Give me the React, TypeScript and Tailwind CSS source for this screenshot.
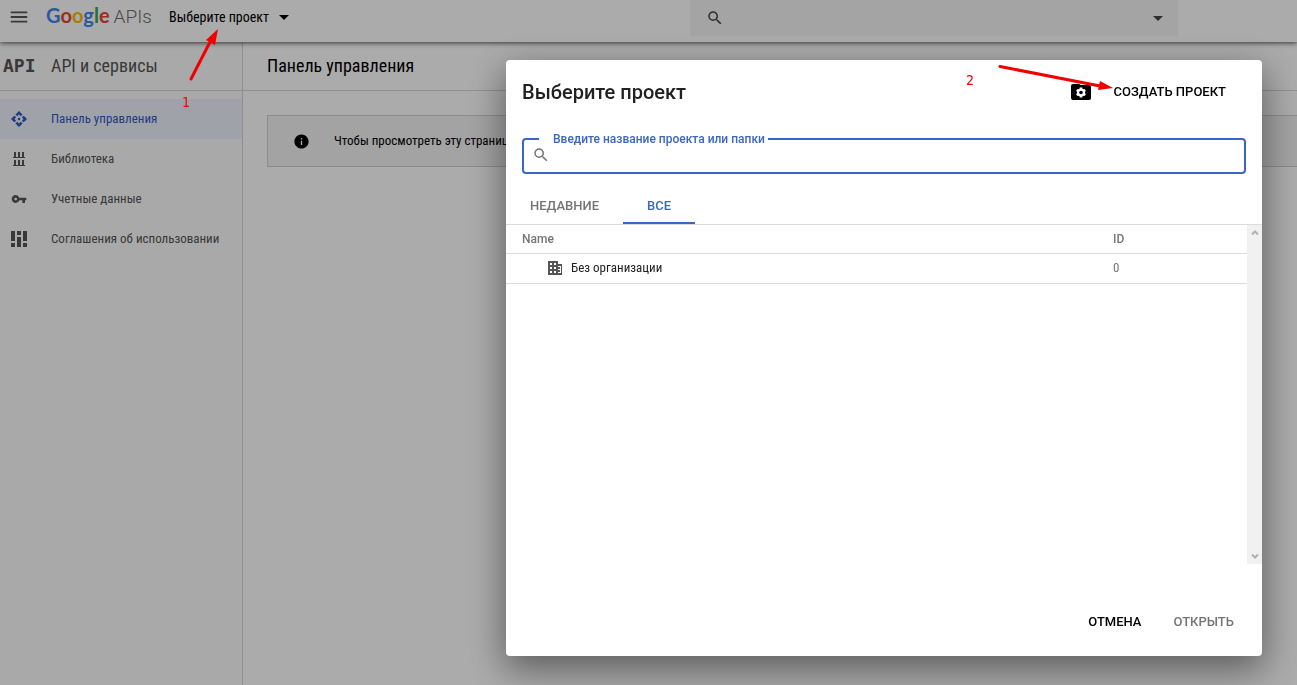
import { MdArrowDropDown, MdInfo, MdMenu, MdSearch, MdVpnKey } from "react-icons/md";

const DashboardIcon = () => (
  <svg viewBox="0 0 16 16" className="size-4" fill="currentColor">
    <path d="M8 0 4.500 3.500V5L6 5.500 8 3.500l2 2 1.500-.5V3.500zM8 16l3.500-3.500V11l-1.500-.5-2 2-2-2-1.500.5v1.500zM0 8l3 3h1.500l.5-1.500L3.500 8 5 6.500 4.500 5H3zM16 8l-3-3h-1.500L11 6.500 12.500 8 11 9.500l.5 1.500H13z" />
    <path d="M4.200 4.200 5.800 5.800M11.800 4.200l-1.600 1.600M4.200 11.800l1.600-1.600M11.800 11.800l-1.600-1.600" stroke="#eef2fd" strokeWidth="1.500" />
    <circle cx="8" cy="8" r="1.300" />
  </svg>
);

const LibraryIcon = () => (
  <svg viewBox="0 0 16 16" className="size-4" fill="currentColor">
    <path d="M3 1h2v5h2V1h2v5h2V1h2v5h1v1H2V6h1zM3 9h2v5h2V9h2v5h2V9h2v5h1v1H2v-1h1z" />
  </svg>
);

const AgreementsIcon = () => (
  <svg viewBox="0 0 16 16" className="size-4" fill="currentColor">
    <path d="M0 0h4v10H0zM0 12h4v4H0zM6 0h4v4H6zM6 6h4v10H6zM12 0h4v10h-4zM12 12h4v4h-4z" />
  </svg>
);

const OrganizationIcon = () => (
  <svg viewBox="0 0 15 14" className="h-[14px] w-[15px]" fill="#555">
    <path
      fillRule="evenodd"
      d="M0 0h10v3h4v11H0zM2 2v2h2V2zM6 2v2h2V2zM2 6v2h2V6zM6 6v2h2V6zM2 10v2h2v-2zM6 10v2h2v-2zM10 5v7h3V5z"
    />
    <path d="M10 6h2v2h-2zM10 9h2v2h-2z" />
  </svg>
);

const FolderSettingsIcon = () => (
  <svg viewBox="0 0 20 16" className="h-4 w-5">
    <path d="M2 0h6l2 1h8a2 2 0 0 1 2 2v11a2 2 0 0 1-2 2H2a2 2 0 0 1-2-2V2a2 2 0 0 1 2-2z" fill="black" />
    <g fill="white">
      <circle cx="10" cy="8.500" r="4" />
      <path d="M8.700 3.500h2.600v10H8.700zM5 7.100l1.300-2.200 8.700 5-1.300 2.200zM13.700 4.900 15 7.100l-8.700 5L5 9.900z" />
    </g>
    <circle cx="10" cy="8.500" r="1.800" fill="black" />
  </svg>
);

const navItems = [
  { title: "Панель управления", icon: <DashboardIcon />, active: true },
  { title: "Библиотека", icon: <LibraryIcon />, active: false },
  { title: "Учетные данные", icon: <MdVpnKey className="size-4" />, active: false },
  { title: "Соглашения об использовании", icon: <AgreementsIcon />, active: false },
];

const Header = () => (
  <header className="relative flex h-[42px] shrink-0 items-center bg-white shadow-[0_1px_5px_rgba(0,0,0,0.7)]">
    <button aria-label="Меню" className="ml-2 mb-2 text-[#555]">
      <MdMenu className="size-[22px]" />
    </button>
    <a href="#" className="mb-[10px] ml-4 flex w-[123px] items-baseline gap-1 leading-6">
      <span className="font-['Lato',sans-serif] text-xl leading-6 font-bold">
        <span className="text-[#4285f4]">G</span>
        <span className="text-[#ea4335]">o</span>
        <span className="text-[#fbbc05]">o</span>
        <span className="text-[#4285f4]">g</span>
        <span className="text-[#34a853]">l</span>
        <span className="text-[#ea4335]">e</span>
      </span>
      <span className="font-['Roboto',sans-serif] text-[19px] font-light text-[#707070]">APIs</span>
    </a>
    <button className="mb-2 flex items-center gap-[3px] text-sm">
      Выберите проект
      <MdArrowDropDown className="size-6" />
    </button>
    <div className="mb-[6px] ml-auto mr-[119px] flex h-9 w-[488px] items-center bg-[#f5f5f5] px-4 text-[#444]">
      <MdSearch className="size-[18px] stroke-current" />
      <input aria-label="Поиск" className="min-w-0 flex-1 outline-none" />
      <MdArrowDropDown className="-mr-2 size-6" />
    </div>
  </header>
);

const Sidebar = () => (
  <aside className="w-[243px] shrink-0 border-r border-[#d5d5d5] bg-[#fcfcfc]">
    <div className="flex h-[49px] items-center border-b border-[#d5d5d5] pl-[3px] text-[#555]">
      <span className="w-12 font-['DejaVu_Sans_Mono',monospace] text-lg font-bold">API</span>
      <h2 className="text-lg">API и сервисы</h2>
    </div>
    <nav className="pt-2">
      {navItems.map((item) => (
        <a
          key={item.title}
          href="#"
          className={`flex h-10 items-center gap-6 pl-[11px] text-[13px] ${item.active ? "bg-[#eef2fd] text-[#3157c4]" : "text-[#555]"}`}
        >
          {item.icon}
          {item.title}
        </a>
      ))}
    </nav>
  </aside>
);

const ProjectDialog = () => (
  <section role="dialog" aria-labelledby="dialog-title" className="flex w-[756px] max-w-full flex-col rounded bg-white shadow-[0_12px_36px_2px_rgba(0,0,0,0.45)]">
    <div className="flex h-16 shrink-0 items-center pl-4 pr-9">
      <h1 id="dialog-title" className="flex-1 text-xl font-medium text-[#212121]">Выберите проект</h1>
      <button aria-label="Управление папками" className="mr-[22px]">
        <FolderSettingsIcon />
      </button>
      <button className="text-[13px] font-medium">СОЗДАТЬ ПРОЕКТ</button>
    </div>

    <fieldset className="mx-4 mt-[7px] h-[43px] shrink-0 rounded border-2 border-[#3b66c4] pl-2">
      <legend className="ml-[7px] pl-[14px] pr-[3px] text-xs font-medium leading-4 text-[#3b66c4]">
        <label htmlFor="project-search">Введите название проекта или папки</label>
      </legend>
      <div className="flex h-4 items-center gap-2 text-[#757575]">
        <MdSearch className="size-[18px] shrink-0 stroke-current" />
        <input id="project-search" className="min-w-0 flex-1 text-sm outline-none" />
      </div>
    </fieldset>

    <div role="tablist" className="mt-3 flex h-[39px] shrink-0 border-b border-[#dcdcdc] text-[13px] font-medium">
      <button role="tab" aria-selected="false" className="px-6 pt-[2px] text-[#757575]">НЕДАВНИЕ</button>
      <button role="tab" aria-selected="true" className="border-b-2 border-[#3b66c4] px-6 pt-1 text-[#3b66c4]">ВСЕ</button>
    </div>

    <div className="flex min-h-0 flex-1">
      <div className="flex-1">
        <table className="w-full text-left text-xs">
          <thead>
            <tr className="h-7 border-b border-[#dcdcdc] text-[#757575]">
              <th className="pl-4 font-medium">Name</th>
              <th className="w-[134px] font-medium">ID</th>
            </tr>
          </thead>
          <tbody className="font-['Roboto_Condensed','Roboto',sans-serif] text-[13px]">
            <tr className="h-[30px] border-b border-[#dcdcdc]">
              <td className="pl-[42px]">
                <span className="flex items-center gap-2 text-[#212121]">
                  <OrganizationIcon />
                  Без организации
                </span>
              </td>
              <td className="text-[#757575]">0</td>
            </tr>
          </tbody>
        </table>
      </div>
      <div className="flex w-[15px] flex-col items-center justify-between bg-[#f1f1f1] py-[5px]">
        <svg viewBox="0 0 8 5" className="h-[5px] w-2" fill="none" stroke="#b0b0b0" strokeWidth="2">
          <path d="M1 4.500 4 1.500l3 3" />
        </svg>
        <svg viewBox="0 0 8 5" className="h-[5px] w-2" fill="none" stroke="#b0b0b0" strokeWidth="2">
          <path d="m1 .5 3 3 3-3" />
        </svg>
      </div>
    </div>

    <div className="flex h-[92px] shrink-0 items-center justify-end gap-8 pr-7 pt-6 text-[13px] font-medium">
      <button>ОТМЕНА</button>
      <button className="text-[#757575]">ОТКРЫТЬ</button>
    </div>
  </section>
);

// Numbered step with an arrow that ends at the control to click
const Steps = () => (
  <div className="pointer-events-none absolute inset-0 font-['DejaVu_Sans_Condensed','DejaVu_Sans',sans-serif] text-sm text-[#f00000]">
    <svg className="absolute left-[185px] top-[28px] h-[54px] w-[36px]" viewBox="0 0 36 54" fill="#f00000" stroke="#f00000">
      <path d="M6 51 25 14" strokeWidth="3" strokeLinecap="round" />
      <path d="M33 1 21 12l9 5z" stroke="none" />
    </svg>
    <span className="absolute left-[182px] top-[92px]">1</span>
    <svg className="absolute left-[998px] top-[62px] h-[32px] w-[118px]" viewBox="0 0 118 32" fill="#f00000" stroke="#f00000">
      <path d="M2 4.500 102 24" strokeWidth="3" strokeLinecap="round" />
      <path d="M115 26 102 19l-2 9z" stroke="none" />
    </svg>
    <span className="absolute left-[966px] top-[70px]">2</span>
  </div>
);

export default function App() {
  return (
    <div className="relative flex min-h-screen flex-col bg-white font-['Roboto_Condensed','Roboto',sans-serif] text-black">
      <Header />
      <div className="flex flex-1">
        <Sidebar />
        <main className="min-w-0 flex-1">
          <div className="flex h-[49px] items-center border-b border-[#d5d5d5] pl-6">
            <h2 className="text-lg">Панель управления</h2>
          </div>
          <div className="ml-6 mt-6 flex h-[52px] items-center gap-6 border border-r-0 border-[#d0d0d0] bg-[#f3f3f3] pl-[25px] text-[13px]">
            <MdInfo className="size-[17px]" />
            <p>Чтобы просмотреть эту страницу</p>
          </div>
        </main>
      </div>
      <div className="fixed inset-0 flex justify-end bg-black/33 pb-[29px] pl-4 pr-[35px] pt-[60px] font-['Roboto',sans-serif]">
        <ProjectDialog />
      </div>
      <Steps />
    </div>
  );
}
